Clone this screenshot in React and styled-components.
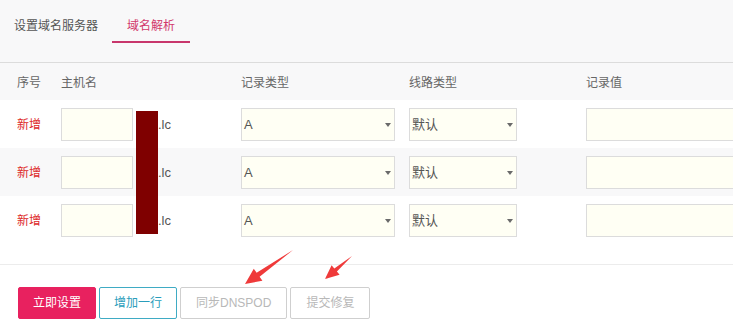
import React from "react";
import styled, { createGlobalStyle } from "styled-components";

const GlobalStyle = createGlobalStyle`
  html, body {
    margin: 0;
    padding: 0;
    background: #fff;
  }
  body {
    font-family: "Liberation Sans", "Noto Sans CJK SC", sans-serif;
    font-size: 12px;
    color: #555;
  }
`;

const rows = [
  { id: 1, type: "A", line: "默认", striped: false },
  { id: 2, type: "A", line: "默认", striped: true },
  { id: 3, type: "A", line: "默认", striped: false },
];

const Arrows = () => (
  <ArrowLayer width="733" height="332" viewBox="0 0 733 332">
    <polygon
      fill="#ef3a3a"
      points="293,250 259.6,276.8 262.4,280.8 245,284 253.8,268.8 256.6,272.8"
    />
    <polygon
      fill="#ef3a3a"
      points="352,256 336.9,271.5 339.6,274.8 325,279 331.6,265.2 334.3,268.4"
    />
  </ArrowLayer>
);

const App = () => (
  <Page>
    <GlobalStyle />
    <TabBar>
      <Tab>设置域名服务器</Tab>
      <Tab $active>域名解析</Tab>
    </TabBar>

    <HeadRow>
      <HeadCell>序号</HeadCell>
      <HeadCell>主机名</HeadCell>
      <HeadCell>记录类型</HeadCell>
      <HeadCell>线路类型</HeadCell>
      <HeadCell>记录值</HeadCell>
    </HeadRow>

    <Body>
      {rows.map(row => (
        <Row key={row.id} $striped={row.striped}>
          <AddLabel>新增</AddLabel>
          <HostCell>
            <TextInput $width={72} />
            <Domain>
              <Hidden>xxx</Hidden>.lc
            </Domain>
          </HostCell>
          <div>
            <SelectBox $width={154}>{row.type}</SelectBox>
          </div>
          <div>
            <SelectBox $width={108}>{row.line}</SelectBox>
          </div>
          <div>
            <TextInput $width={200} />
          </div>
        </Row>
      ))}
      <Redaction />
    </Body>

    <Footer>
      <Button $variant="primary">立即设置</Button>
      <Button $variant="outline">增加一行</Button>
      <Button $variant="disabled">同步DNSPOD</Button>
      <Button $variant="disabled">提交修复</Button>
    </Footer>

    <Arrows />
  </Page>
);

export default App;

const Page = styled.div`
  position: relative;
  width: 733px;
  height: 332px;
  overflow: hidden;
  background: #fff;
`;

const TabBar = styled.div`
  display: flex;
  align-items: flex-start;
  height: 62px;
  padding-top: 11px;
  box-sizing: border-box;
  background: #f8f8f9;
`;

const Tab = styled.div`
  height: 30px;
  line-height: 30px;
  padding: 0 ${props => (props.$active ? "15px" : "14px")};
  font-size: 12px;
  color: ${props => (props.$active ? "#d2386c" : "#555")};
  border-bottom: 2px solid
    ${props => (props.$active ? "#c8366c" : "transparent")};
`;

const columns = "44px 180px 168px 177px 1fr";

const HeadRow = styled.div`
  display: grid;
  grid-template-columns: ${columns};
  align-items: center;
  height: 37px;
  padding-left: 17px;
  border-top: 1px solid #dcdcdc;
  background: #f8f8f9;
`;

const HeadCell = styled.div`
  font-size: 12px;
  color: #666;
`;

const Body = styled.div`
  position: relative;
`;

const Row = styled.div`
  display: grid;
  grid-template-columns: ${columns};
  align-items: center;
  height: 48px;
  padding-left: 17px;
  background: ${props => (props.$striped ? "#f8f8f9" : "#fff")};
`;

const AddLabel = styled.div`
  font-size: 12px;
  color: #dd2a2a;
  margin-top: -2px;
`;

const HostCell = styled.div`
  display: flex;
  align-items: center;
`;

const TextInput = styled.div`
  width: ${props => props.$width}px;
  height: 33px;
  box-sizing: border-box;
  border: 1px solid #dcdcdc;
  background: #fffff4;
  flex-shrink: 0;
`;

const Domain = styled.span`
  margin-left: 3px;
  font-size: 13px;
  color: #555;
`;

const Hidden = styled.span`
  display: inline-block;
  width: 22px;
  overflow: hidden;
  vertical-align: bottom;
`;

const SelectBox = styled.div`
  position: relative;
  width: ${props => props.$width}px;
  height: 33px;
  box-sizing: border-box;
  border: 1px solid #dcdcdc;
  background: #fffff4;
  padding-left: 2px;
  line-height: 31px;
  font-size: 13px;
  color: #555;

  &::after {
    content: "";
    position: absolute;
    right: 3px;
    top: 14px;
    border-left: 3.5px solid transparent;
    border-right: 3.5px solid transparent;
    border-top: 4px solid #6a6a6a;
  }
`;

const Redaction = styled.div`
  position: absolute;
  left: 136px;
  top: 11px;
  width: 22px;
  height: 123px;
  background: #7f0000;
`;

const Footer = styled.div`
  display: flex;
  gap: 3px;
  margin-top: 20px;
  padding: 22px 0 0 18px;
  border-top: 1px solid #ececec;
`;

const variants = {
  primary: { bg: "#e8215f", border: "#e8215f", color: "#fff", pad: 14 },
  outline: { bg: "#fff", border: "#3fabc4", color: "#2a9dbb", pad: 14 },
  disabled: { bg: "#fff", border: "#cfcfcf", color: "#b8b8b8", pad: 15 },
};

const Button = styled.div`
  height: 32px;
  line-height: 30px;
  box-sizing: border-box;
  padding: 0 ${props => variants[props.$variant].pad}px;
  border-radius: 2px;
  font-size: 12px;
  background: ${props => variants[props.$variant].bg};
  border: 1px solid ${props => variants[props.$variant].border};
  color: ${props => variants[props.$variant].color};
`;

const ArrowLayer = styled.svg`
  position: absolute;
  left: 0;
  top: 0;
  pointer-events: none;
`;
